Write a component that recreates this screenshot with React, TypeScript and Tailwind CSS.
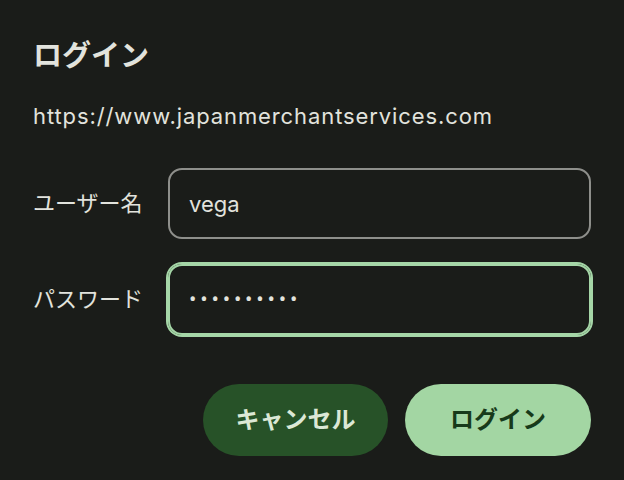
import React from 'react';

const sans = "font-['Inter','Noto_Sans_CJK_JP',sans-serif]";

const Field: React.FC<{ label: string; value: string; type?: string; focused?: boolean }> = ({
    label,
    value,
    type = 'text',
    focused,
}) => (
    <>
        <label className="whitespace-nowrap text-[22px] text-[#e2e3dd]">{label}</label>
        <input
            type={type}
            defaultValue={value}
            readOnly
            className={`h-[71px] w-full rounded-[14px] border-2 bg-transparent px-[19px] text-[22px] text-[#e2e3dd] outline-none ${
                focused
                    ? "border-[#a5d6a7] shadow-[0_0_0_2px_#a5d6a7] font-['Roboto',sans-serif] tracking-[3.8px]"
                    : 'border-[#8e8f8b]'
            }`}
        />
    </>
);

const App: React.FC = () => {
    return (
        <div className={`min-h-screen bg-[#1a1c19] px-[33px] pt-[36px] ${sans}`}>
            <h1 className="text-[29px] font-bold leading-[40px] text-[#e2e3dd]">ログイン</h1>
            <p className="mt-[25px] text-[22px] leading-[30px] tracking-[0.9px] text-[#e2e3dd]">
                https://www.japanmerchantservices.com
            </p>

            <div className="mt-[37px] grid grid-cols-[109px_1fr] items-center gap-x-[26px] gap-y-[25px]">
                <Field label="ユーザー名" value="vega" />
                <Field label="パスワード" value="0123456789" type="password" focused />
            </div>

            <div className="mt-[49px] flex justify-end gap-[17px]">
                <button className="h-[72px] w-[185px] rounded-full bg-[#275228] text-[24px] font-bold text-[#dce8d6]">
                    キャンセル
                </button>
                <button className="h-[72px] w-[186px] rounded-full bg-[#a3d6a3] text-[24px] font-bold text-[#173a1a]">
                    ログイン
                </button>
            </div>
        </div>
    );
};

export default App;
